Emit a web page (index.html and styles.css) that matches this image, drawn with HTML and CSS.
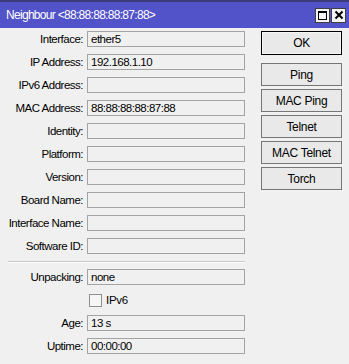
FILE: index.html
```html
<!DOCTYPE html>
<html>

<head>
  <title>Neighbour</title>
  <link rel="stylesheet" href="styles.css">
</head>

<body>
  <div class="window">
    <div class="titlebar">
      <span class="title">Neighbour &lt;88:88:88:88:87:88&gt;</span>
      <div class="title-btns">
        <span class="tbtn"><span class="max-box"></span></span>
        <span class="tbtn">
          <svg width="10" height="10" viewBox="0 0 10 10"><path d="M1.5 1.5 L8.5 8.5 M8.5 1.5 L1.5 8.5" stroke="#000" stroke-width="2"/></svg>
        </span>
      </div>
    </div>

    <div class="content">
      <div class="form">
        <div class="row"><label>Interface:</label><div class="field">ether5</div></div>
        <div class="row"><label>IP Address:</label><div class="field">192.168.1.10</div></div>
        <div class="row"><label>IPv6 Address:</label><div class="field"></div></div>
        <div class="row"><label>MAC Address:</label><div class="field">88:88:88:88:87:88</div></div>
        <div class="row"><label>Identity:</label><div class="field"></div></div>
        <div class="row"><label>Platform:</label><div class="field"></div></div>
        <div class="row"><label>Version:</label><div class="field"></div></div>
        <div class="row"><label>Board Name:</label><div class="field"></div></div>
        <div class="row"><label>Interface Name:</label><div class="field"></div></div>
        <div class="row"><label>Software ID:</label><div class="field"></div></div>

        <div class="separator"></div>

        <div class="row"><label>Unpacking:</label><div class="field">none</div></div>
        <div class="row"><label></label><div class="check"><span class="box"></span><span>IPv6</span></div></div>
        <div class="row"><label>Age:</label><div class="field">13 s</div></div>
        <div class="row"><label>Uptime:</label><div class="field">00:00:00</div></div>
      </div>

      <div class="buttons">
        <button class="btn btn-ok">OK</button>
        <button class="btn">Ping</button>
        <button class="btn">MAC Ping</button>
        <button class="btn">Telnet</button>
        <button class="btn">MAC Telnet</button>
        <button class="btn">Torch</button>
      </div>
    </div>
  </div>
</body>

</html>
```

FILE: styles.css
```css
body {
  margin: 0;
  background-color: #f0f0f0;
  font-family: "Liberation Sans", Arial, sans-serif;
  font-size: 12px;
  color: #000;
}

.window {
  width: 349px;
  height: 364px;
  background-color: #f0f0f0;
}

.titlebar {
  height: 26px;
  border-top: 2px solid #3c3c78;
  background-color: #5252c9;
  display: flex;
  align-items: center;
  justify-content: space-between;
  padding: 0 3px 0 6px;
}

.title {
  color: #fff;
  font-size: 12px;
  letter-spacing: -0.7px;
}

.title-btns {
  display: flex;
  gap: 1px;
}

.tbtn {
  width: 13px;
  height: 13px;
  border: 1px solid #404040;
  background-color: #f4f4f4;
  display: flex;
  align-items: center;
  justify-content: center;
}

.max-box {
  width: 7px;
  height: 6px;
  border: 1px solid #000;
  border-top-width: 2px;
}

.content {
  display: flex;
  padding-top: 3px;
}

.form {
  display: flex;
  flex-direction: column;
  gap: 7px;
  width: 245px;
}

.row {
  display: flex;
  align-items: center;
  gap: 4px;
  height: 16px;
}

.row label {
  width: 83px;
  text-align: right;
  white-space: nowrap;
  font-size: 11.5px;
  letter-spacing: -0.5px;
}

.field {
  width: 158px;
  height: 16px;
  box-sizing: border-box;
  border: 1px solid #a3a3a3;
  padding: 0 3px;
  line-height: 14px;
  font-size: 11.5px;
  letter-spacing: -0.5px;
}

.separator {
  height: 1px;
  margin: 0 0 -1px 8px;
  background-color: #c8c8c8;
  border-bottom: 1px solid #fff;
}

.check {
  display: flex;
  align-items: center;
  gap: 4px;
  margin-left: 2px;
  font-size: 11.5px;
  letter-spacing: -0.3px;
}

.check .box {
  width: 13px;
  height: 13px;
  box-sizing: border-box;
  border: 1px solid #8f8f8f;
  background-color: #f6f6f6;
}

.buttons {
  display: flex;
  flex-direction: column;
  gap: 3px;
  margin-left: 16px;
  width: 81px;
}

.btn {
  height: 23px;
  margin: 0;
  padding: 0;
  font-family: "Liberation Sans", Arial, sans-serif;
  font-size: 12px;
  letter-spacing: -0.3px;
  color: #000;
  background-color: #e9e9e9;
  border: 1px solid #767676;
}

.btn-ok {
  height: 24px;
  margin-bottom: 5px;
  border: 1px solid #000;
  box-shadow: inset 0 0 0 1px #f6f6f6;
}
```
